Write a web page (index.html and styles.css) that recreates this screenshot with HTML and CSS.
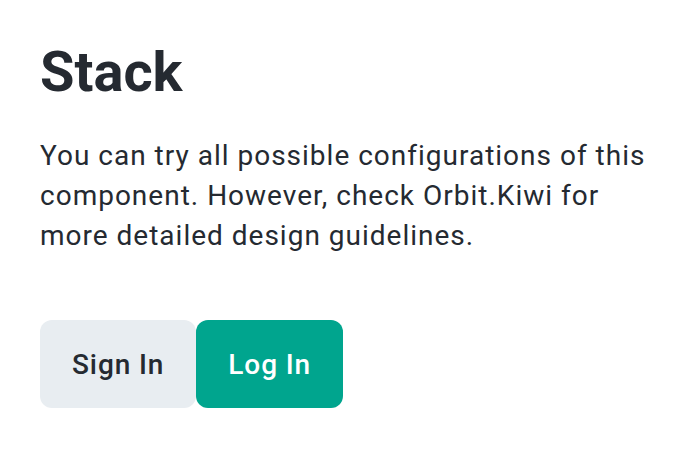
FILE: index.html
```html
<!DOCTYPE html>
<html>
<head>
<meta charset="utf-8">
<link rel="stylesheet" href="styles.css">
</head>
<body>
<main class="page">
  <h1 class="title">Stack</h1>
  <p class="text">You can try all possible configurations of this component. However, check Orbit.Kiwi for more detailed design guidelines.</p>
  <div class="actions">
    <button class="btn btn-secondary">Sign In</button>
    <button class="btn btn-primary">Log In</button>
  </div>
</main>
</body>
</html>
```
FILE: styles.css
```css
html, body {
  margin: 0;
  padding: 0;
  background: #ffffff;
}
body {
  font-family: Roboto, "Noto Sans", sans-serif;
  color: #252a31;
}
.page {
  padding: 40px;
  display: flex;
  flex-direction: column;
  align-items: flex-start;
}
.title {
  margin: 0;
  font-size: 56px;
  line-height: 64px;
  font-weight: 700;
}
.text {
  margin: 32px 0 0;
  font-size: 28px;
  line-height: 40px;
  font-weight: 400;
  letter-spacing: 1px;
}
.actions {
  display: flex;
  gap: 0;
  margin-top: 64px;
}
.btn {
  height: 88px;
  padding: 0 32px;
  border: none;
  border-radius: 12px;
  font-family: Roboto, "Noto Sans", sans-serif;
  font-size: 28px;
  font-weight: 500;
  letter-spacing: 0.9px;
}
.btn-secondary {
  background: #e8edf1;
  color: #252a31;
}
.btn-primary {
  background: #00a58e;
  color: #ffffff;
}
```
